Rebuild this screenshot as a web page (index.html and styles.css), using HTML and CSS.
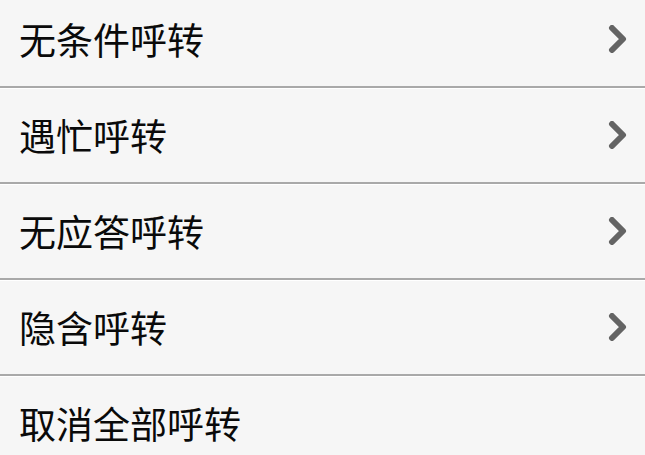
FILE: index.html
```html
<!DOCTYPE html>
<html lang="zh">
<head>
<meta charset="utf-8">
<link rel="stylesheet" href="styles.css">
</head>
<body>
<ul class="list">
  <li class="row"><span class="label">无条件呼转</span><svg class="chev" viewBox="0 0 20 28"><polyline points="4,3 15,14 4,25"/></svg></li>
  <li class="row"><span class="label">遇忙呼转</span><svg class="chev" viewBox="0 0 20 28"><polyline points="4,3 15,14 4,25"/></svg></li>
  <li class="row"><span class="label">无应答呼转</span><svg class="chev" viewBox="0 0 20 28"><polyline points="4,3 15,14 4,25"/></svg></li>
  <li class="row"><span class="label">隐含呼转</span><svg class="chev" viewBox="0 0 20 28"><polyline points="4,3 15,14 4,25"/></svg></li>
  <li class="row last"><span class="label">取消全部呼转</span></li>
</ul>
</body>
</html>
```
FILE: styles.css
```css
html, body {
  margin: 0;
  padding: 0;
  background: #f6f6f6;
  overflow: hidden;
}
.list {
  list-style: none;
  margin: -8px 0 0 0;
  padding: 0;
}
.row {
  height: 94px;
  display: flex;
  align-items: center;
  justify-content: space-between;
  padding: 0 17px 0 19px;
  border-bottom: 2px solid #a9a9a9;
  box-shadow: 0 1px 0 #ffffff;
  position: relative;
}
.row.last {
  border-bottom: none;
  box-shadow: none;
}
.label {
  font-family: "Noto Sans CJK SC", "Noto Sans", sans-serif;
  font-size: 37px;
  font-weight: 400;
  color: #0a0a0a;
  line-height: 1;
}
.chev {
  width: 20px;
  height: 28px;
}
.chev polyline {
  fill: none;
  stroke: #646464;
  stroke-width: 6;
  stroke-linecap: round;
  stroke-linejoin: round;
}
```
